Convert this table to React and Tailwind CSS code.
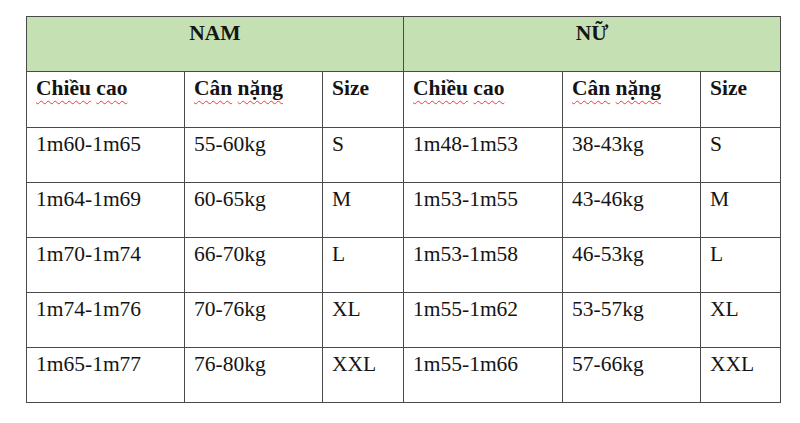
import React from 'react'

const cols = 'grid grid-cols-[158px_138px_81px_159px_138px_80px]'

const men = [
  ['1m60-1m65', '55-60kg', 'S'],
  ['1m64-1m69', '60-65kg', 'M'],
  ['1m70-1m74', '66-70kg', 'L'],
  ['1m74-1m76', '70-76kg', 'XL'],
  ['1m65-1m77', '76-80kg', 'XXL'],
]

const women = [
  ['1m48-1m53', '38-43kg', 'S'],
  ['1m53-1m55', '43-46kg', 'M'],
  ['1m53-1m58', '46-53kg', 'L'],
  ['1m55-1m62', '53-57kg', 'XL'],
  ['1m55-1m66', '57-66kg', 'XXL'],
]

// word with the red spell-check squiggle under it
function Squiggle({ children }) {
  return (
    <span className="underline decoration-wavy decoration-[#e8403f] decoration-1 underline-offset-[5px]">
      {children}
    </span>
  )
}

function Cell({ children, bold, h = 'h-[55px]' }) {
  return (
    <div
      className={`${h} border-r border-b border-[#4a4a4a] pl-[9px] pt-1 leading-6 ${bold ? 'font-bold' : ''}`}
    >
      {children}
    </div>
  )
}

function HeadLabels() {
  return (
    <>
      <Cell bold h="h-[56px]">
        <Squiggle>Chiều</Squiggle> <Squiggle>cao</Squiggle>
      </Cell>
      <Cell bold h="h-[56px]">
        <Squiggle>Cân</Squiggle> <Squiggle>nặng</Squiggle>
      </Cell>
      <Cell bold h="h-[56px]">Size</Cell>
    </>
  )
}

export default function App() {
  return (
    <div className="w-[800px] h-[423px] bg-white pt-4 pl-[26px] text-[21.5px] text-[#141414]" style={{ fontFamily: '"Liberation Serif", "Times New Roman", serif' }}>
      <div className={`${cols} w-[755px] border-l border-t border-[#4a4a4a]`}>
        <div className="col-span-3 h-[55px] bg-[#c5e0b3] border-r border-b border-[#4a4a4a] pt-1 leading-6 text-center font-bold">
          NAM
        </div>
        <div className="col-span-3 h-[55px] bg-[#c5e0b3] border-r border-b border-[#4a4a4a] pt-1 leading-6 text-center font-bold">
          NỮ
        </div>

        <HeadLabels />
        <HeadLabels />

        {men.map((m, i) => (
          <React.Fragment key={i}>
            {m.map((v) => (
              <Cell key={'m' + v}>{v}</Cell>
            ))}
            {women[i].map((v) => (
              <Cell key={'w' + v}>{v}</Cell>
            ))}
          </React.Fragment>
        ))}
      </div>
    </div>
  )
}
